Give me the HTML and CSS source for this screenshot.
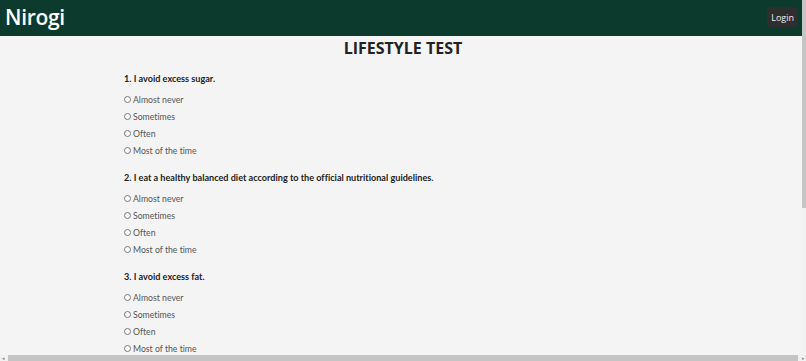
FILE: index.html
```html
<!DOCTYPE html>
<html lang="en">
<head>
<meta charset="utf-8">
<title>Nirogi - Lifestyle Test</title>
<link rel="stylesheet" href="styles.css">
</head>
<body>
<header class="topbar">
  <a class="brand" href="#">Nirogi</a>
  <button class="login" type="button">Login</button>
</header>
<main class="page">
  <h1 class="title">LIFESTYLE TEST</h1>
  <form class="quiz">
    <fieldset class="question">
      <legend class="q-text">1. I avoid excess sugar.</legend>
      <label class="option"><input type="radio" name="q1"> Almost never</label>
      <label class="option"><input type="radio" name="q1"> Sometimes</label>
      <label class="option"><input type="radio" name="q1"> Often</label>
      <label class="option"><input type="radio" name="q1"> Most of the time</label>
    </fieldset>
    <fieldset class="question">
      <legend class="q-text">2. I eat a healthy balanced diet according to the official nutritional guidelines.</legend>
      <label class="option"><input type="radio" name="q2"> Almost never</label>
      <label class="option"><input type="radio" name="q2"> Sometimes</label>
      <label class="option"><input type="radio" name="q2"> Often</label>
      <label class="option"><input type="radio" name="q2"> Most of the time</label>
    </fieldset>
    <fieldset class="question">
      <legend class="q-text">3. I avoid excess fat.</legend>
      <label class="option"><input type="radio" name="q3"> Almost never</label>
      <label class="option"><input type="radio" name="q3"> Sometimes</label>
      <label class="option"><input type="radio" name="q3"> Often</label>
      <label class="option"><input type="radio" name="q3"> Most of the time</label>
    </fieldset>
  </form>
</main>
<div class="vscroll" aria-hidden="true"><div class="vthumb"></div></div>
<div class="hscroll" aria-hidden="true"><span class="arrow">&#9666;</span><div class="hthumb"></div><span class="arrow">&#9656;</span></div>
</body>
</html>
```
FILE: styles.css
```css
html {
  background: #f4f4f4;
}
body {
  margin: 0;
  font-family: "Open Sans", "Noto Sans", sans-serif;
  color: #222;
  overflow: hidden;
  height: 361px;
}
.topbar {
  height: 36px;
  background: #0c3b2d;
  display: flex;
  align-items: center;
  justify-content: space-between;
  padding: 0 8px 0 5px;
}
.brand {
  color: #fff;
  text-decoration: none;
  font-size: 21px;
  font-weight: 600;
  line-height: 1;
  margin-top: -1px;
  letter-spacing: -0.3px;
}
.login {
  background: #2e2e2e;
  color: #f0f0f0;
  border: 0;
  border-radius: 3px;
  font-family: inherit;
  font-size: 9px;
  height: 20px;
  padding: 0 4px;
  margin-top: -2px;
}
.page {
  padding: 0 0 20px 124px;
}
.title {
  margin: 0 0 0 -124px;
  padding-top: 1px;
  text-align: center;
  font-size: 16px;
  font-weight: 700;
  line-height: 22px;
  color: #222;
}
.quiz {
  display: flex;
  flex-direction: column;
  gap: 15px;
  margin-top: 14px;
  font-family: "Lato", "Open Sans", sans-serif;
  font-variant-ligatures: none;
}
.question {
  border: 0;
  margin: 0;
  padding: 0;
  display: flex;
  flex-direction: column;
  gap: 5px;
}
.q-text {
  padding: 0;
  font-size: 9.1px;
  font-weight: 700;
  line-height: 12px;
  margin-bottom: 9px;
  color: #222;
}
.option {
  display: flex;
  align-items: center;
  gap: 2px;
  font-size: 8.7px;
  line-height: 12px;
  color: #555;
}
.option input {
  appearance: none;
  width: 7px;
  height: 7px;
  margin: 0 0 1px 0;
  border: 1px solid #777;
  border-radius: 50%;
  background: #fff;
}
.vscroll {
  position: fixed;
  top: 0;
  right: 0;
  width: 4px;
  height: 355px;
  background: #f1f1f1;
}
.vthumb {
  height: 208px;
  background: #c4c4c4;
}
.hscroll {
  position: fixed;
  left: 0;
  bottom: 0;
  width: 806px;
  height: 6px;
  background: #f1f1f1;
  display: flex;
  align-items: center;
}
.hthumb {
  flex: 1;
  height: 6px;
  background: #c4c4c4;
  margin: 0 2px;
}
.arrow {
  font-size: 5px;
  line-height: 6px;
  color: #888;
  width: 6px;
  text-align: center;
}
```
